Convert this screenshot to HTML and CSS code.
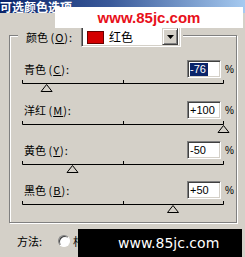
FILE: index.html
```html
<!DOCTYPE html>
<html>
<head>
<meta charset="utf-8">
<link rel="stylesheet" href="styles.css">
</head>
<body>
<div class="titlebar"><span class="title">可选颜色选项</span></div>
<div class="dialog">
  <div class="group">
    <div class="legend">
      <span class="legend-label">颜色 <span class="key">(<u>O</u>)</span>:</span>
      <div class="combo">
        <span class="swatch"></span>
        <span class="combo-text">红色</span>
        <span class="drop"><svg width="7" height="4" viewBox="0 0 7 4"><polygon points="0,0 7,0 3.5,4" fill="#000"/></svg></span>
      </div>
    </div>
    <div class="rows">
      <div class="row">
        <div class="line">
          <span class="label">青色 <span class="key">(<u>C</u>)</span>:</span>
          <span class="field"><span class="sel">-76</span></span>
          <span class="pct">%</span>
        </div>
        <svg class="slider" width="202" height="14" viewBox="0 0 202 14">
          <path d="M0.5 0 V3.5 H201.5 V0 M101.5 0 V3.5" fill="none" stroke="#000"/>
          <polygon points="24.6,4.5 19.1,11.5 30.1,11.5" fill="none" stroke="#000"/>
        </svg>
      </div>
      <div class="row">
        <div class="line">
          <span class="label">洋红 <span class="key">(<u>M</u>)</span>:</span>
          <span class="field">+100</span>
          <span class="pct">%</span>
        </div>
        <svg class="slider" width="202" height="14" viewBox="0 0 202 14">
          <path d="M0.5 0 V3.5 H201.5 V0 M101.5 0 V3.5" fill="none" stroke="#000"/>
          <polygon points="201.5,4.5 196,11.5 207,11.5" fill="none" stroke="#000"/>
        </svg>
      </div>
      <div class="row">
        <div class="line">
          <span class="label">黄色 <span class="key">(<u>Y</u>)</span>:</span>
          <span class="field">-50</span>
          <span class="pct">%</span>
        </div>
        <svg class="slider" width="202" height="14" viewBox="0 0 202 14">
          <path d="M0.5 0 V3.5 H201.5 V0 M101.5 0 V3.5" fill="none" stroke="#000"/>
          <polygon points="50.5,4.5 45,11.5 56,11.5" fill="none" stroke="#000"/>
        </svg>
      </div>
      <div class="row">
        <div class="line">
          <span class="label">黑色 <span class="key">(<u>B</u>)</span>:</span>
          <span class="field">+50</span>
          <span class="pct">%</span>
        </div>
        <svg class="slider" width="202" height="14" viewBox="0 0 202 14">
          <path d="M0.5 0 V3.5 H201.5 V0 M101.5 0 V3.5" fill="none" stroke="#000"/>
          <polygon points="151,4.5 145.5,11.5 156.5,11.5" fill="none" stroke="#000"/>
        </svg>
      </div>
    </div>
  </div>
  <div class="method">
    <span class="method-label">方法:</span>
    <span class="radio"></span>
    <span class="opt">相对</span>
  </div>
</div>
<div class="wm-top">www.85jc.com</div>
<div class="wm-bottom">www.85jc.com</div>
</body>
</html>
```
FILE: styles.css
```css
html, body {
  margin: 0;
  padding: 0;
}
body {
  width: 245px;
  height: 257px;
  overflow: hidden;
  background: #d4d0c8;
  font-family: "Noto Sans CJK SC", "Liberation Sans", sans-serif;
  font-size: 11px;
  color: #000;
  position: relative;
}
.titlebar {
  height: 13px;
  overflow: hidden;
  background: linear-gradient(to right, #0a246a 0%, #3a5a9a 45%, #a6caf0 100%);
}
.title {
  display: block;
  margin-top: -1px;
  font-size: 12px;
  line-height: 15px;
  font-weight: bold;
  color: #fff;
  white-space: nowrap;
}
.dialog {
  padding: 22px 0 0 9px;
}
.group {
  box-sizing: border-box;
  width: 228px;
  height: 188px;
  border: 1px solid #808080;
  box-shadow: 1px 1px 0 #fff, inset 1px 1px 0 #fff;
  padding: 0 11px 0 12px;
}
.legend {
  display: flex;
  align-items: center;
  width: max-content;
  height: 21px;
  margin: -10px 0 0 -4px;
  padding: 0 2px 0 8px;
  background: #d4d0c8;
}
.legend-label {
  width: 55px;
  white-space: nowrap;
}
.key {
  letter-spacing: 1px;
}
.combo {
  box-sizing: border-box;
  width: 100px;
  height: 21px;
  display: flex;
  align-items: center;
  background: #fff;
  border: 1px solid;
  border-color: #808080 #fff #fff #808080;
  box-shadow: inset 1px 1px 0 #404040, inset -1px -1px 0 #d4d0c8;
  padding: 2px 2px 2px 5px;
}
.swatch {
  width: 15px;
  height: 11px;
  background: #d40000;
  border: 1px solid #6a0000;
  margin-top: 2px;
}
.combo-text {
  margin-left: 5px;
  flex: 1;
  font-size: 12px;
}
.drop {
  box-sizing: border-box;
  width: 16px;
  height: 17px;
  display: flex;
  align-items: center;
  justify-content: center;
  background: #d4d0c8;
  border: 1px solid;
  border-color: #d4d0c8 #404040 #404040 #d4d0c8;
  box-shadow: inset 1px 1px 0 #fff, inset -1px -1px 0 #808080;
}
.rows {
  margin-top: 13px;
}
.row {
  height: 40px;
}
.row:first-child {
  height: 41px;
}
.line {
  display: grid;
  grid-template-columns: 1fr 34px 15px;
  align-items: center;
  height: 18px;
  margin: 0 -11px 0 2px;
}
.label {
  white-space: nowrap;
}
.field {
  box-sizing: border-box;
  height: 18px;
  background: #fff;
  border: 1px solid;
  border-color: #808080 #fff #fff #808080;
  box-shadow: inset 1px 1px 0 #404040, inset -1px -1px 0 #d4d0c8;
  padding: 2px 2px 0 2px;
  font-family: "Liberation Sans", sans-serif;
  font-size: 11px;
  line-height: 13px;
}
.sel {
  display: inline-block;
  background: #0a246a;
  color: #fff;
  padding-right: 2px;
}
.pct {
  padding-left: 4px;
  font-family: "Liberation Sans", sans-serif;
  font-size: 10px;
}
.slider {
  display: block;
  margin-top: 2px;
  overflow: visible;
}
.method {
  display: flex;
  align-items: center;
  height: 18px;
  margin-top: 9px;
  padding-left: 8px;
}
.method-label {
  width: 41px;
}
.radio {
  box-sizing: border-box;
  width: 12px;
  height: 12px;
  border-radius: 50%;
  background: #fff;
  border: 1px solid;
  border-color: #808080 #fff #fff #808080;
  box-shadow: inset 1px 1px 0 #404040;
}
.opt {
  margin-left: 3px;
}
.wm-top {
  position: absolute;
  left: 55px;
  top: 7px;
  width: 188px;
  height: 21px;
  background: #fff;
  color: #e8101a;
  font-family: "Liberation Sans", sans-serif;
  font-weight: bold;
  font-size: 15px;
  line-height: 21px;
  text-align: center;
}
.wm-bottom {
  position: absolute;
  left: 78px;
  top: 229px;
  width: 124px;
  height: 28px;
  padding-left: 40px;
  background: #000;
  color: #fff;
  font-family: "DejaVu Sans", sans-serif;
  font-size: 14px;
  line-height: 28px;
}
```
